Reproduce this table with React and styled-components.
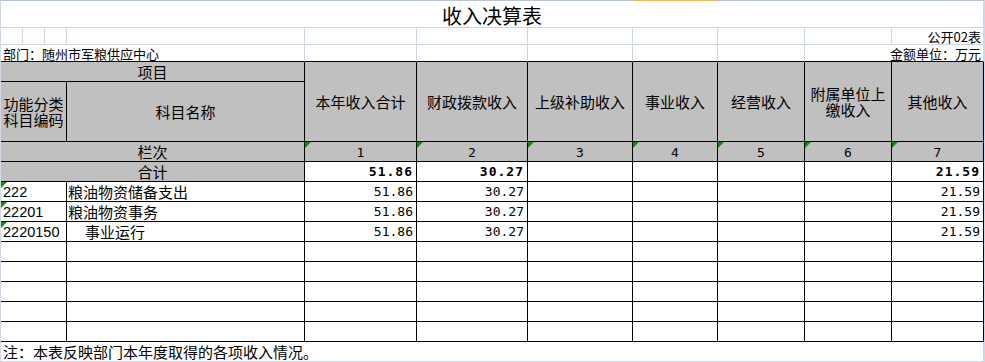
import React from "react";
import styled, { createGlobalStyle } from "styled-components";

const GRID = "#d0d7e5";
const GRAY = "#c0c0c0";

const Global = createGlobalStyle`
  body {
    margin: 0;
    background: #fff;
  }
`;

const Sheet = styled.div`
  display: grid;
  grid-template-columns: 22px 22px 22px 238px 112px 111px 105px 85px 87px 87px 92px;
  grid-template-rows: 1px 27px 17px 17px 20px 60px repeat(11, 20px);
  width: max-content;
  border-left: 1px solid ${GRID};
  border-right: 1px solid ${GRID};
  font-family: "Noto Sans CJK SC", sans-serif;
  font-size: 15px;
  line-height: 16px;
  color: #000;
`;

const Strip = styled.div`
  grid-column: span ${(p) => p.$span || 1};
  background: ${(p) => (p.$active ? "#f2b65a" : "#b9c6d9")};
`;

const Cell = styled.div`
  position: relative;
  box-sizing: border-box;
  grid-column: span ${(p) => p.$span || 1};
  grid-row: span ${(p) => p.$rows || 1};
  display: flex;
  align-items: center;
  justify-content: ${(p) => p.$align || "flex-start"};
  padding: 0 2px;
  white-space: nowrap;
  overflow: hidden;
  background: ${(p) => (p.$fill ? GRAY : "#fff")};
  border-right: 1px solid ${(p) => (p.$soft ? GRID : "#000")};
  border-bottom: 1px solid ${(p) => (p.$softBottom ? GRID : "#000")};

  ${(p) =>
    p.$mark &&
    `
    &::before {
      content: "";
      position: absolute;
      top: 0;
      left: 0;
      border-top: 6px solid #138a13;
      border-right: 6px solid transparent;
    }
  `}
`;

const Title = styled(Cell)`
  justify-content: center;
  padding-top: 3px;
  font-size: 20px;
  line-height: 20px;
`;

const Caption = styled(Cell)`
  font-size: 13px;
  line-height: 14px;
  padding-top: 1px;
`;

const HeadCell = styled(Cell)`
  justify-content: center;
  text-align: center;
  white-space: normal;
  background: ${GRAY};
`;

const Index = styled(Cell)`
  justify-content: center;
  background: ${GRAY};
  font-family: "DejaVu Sans Mono", monospace;
  font-size: 13px;
  padding-top: 2px;
`;

const NumCell = styled(Cell)`
  justify-content: flex-end;
  padding: 1px 3px 0 0;
  font-family: "DejaVu Sans Mono", monospace;
  font-size: 13px;
  font-weight: ${(p) => (p.$bold ? 700 : 400)};
  letter-spacing: ${(p) => (p.$bold ? "1px" : "0")};
`;

const CodeCell = styled(Cell)`
  padding: 1px 0 0 2px;
  font-family: "Liberation Sans", sans-serif;
  font-size: 14.5px;
`;

const NameCell = styled(Cell)`
  padding: 1px 0 0 ${(p) => (p.$indent ? 18 : 1)}px;
`;

const Note = styled(Cell)`
  padding: 1px 0 0 2px;
`;

const heads = [
  "本年收入合计",
  "财政拨款收入",
  "上级补助收入",
  "事业收入",
  "经营收入",
  "附属单位上缴收入",
  "其他收入",
];

const totals = ["51.86", "30.27", "", "", "", "", "21.59"];

const rows = [
  { code: "222", name: "粮油物资储备支出", vals: totals },
  { code: "22201", name: "粮油物资事务", vals: totals },
  { code: "2220150", name: "事业运行", indent: true, vals: totals },
  ...Array.from({ length: 5 }, () => ({ code: "", name: "", vals: Array(7).fill("") })),
];

export default function App() {
  return (
    <>
      <Global />
      <Sheet>
        <Strip $span={7} />
        <Strip $active />
        <Strip $span={3} />

        <Title $span={11} $soft $softBottom>
          收入决算表
        </Title>

        {Array.from({ length: 10 }, (_, i) => (
          <Caption key={i} $soft $softBottom />
        ))}
        <Caption $soft $softBottom $align="flex-end">
          公开02表
        </Caption>

        <Caption $span={4} $soft>
          部门：随州市军粮供应中心
        </Caption>
        {Array.from({ length: 5 }, (_, i) => (
          <Caption key={i} $soft />
        ))}
        <Caption $span={2} $soft $align="flex-end">
          金额单位：万元
        </Caption>

        <HeadCell $span={4}>项目</HeadCell>
        {heads.map((h) => (
          <HeadCell key={h} $rows={2}>
            {h}
          </HeadCell>
        ))}
        <HeadCell $span={3}>功能分类科目编码</HeadCell>
        <HeadCell>科目名称</HeadCell>

        <HeadCell $span={4}>栏次</HeadCell>
        {heads.map((h, i) => (
          <Index key={h} $mark>
            {i + 1}
          </Index>
        ))}

        <HeadCell $span={4}>合计</HeadCell>
        {totals.map((v, i) => (
          <NumCell key={i} $bold>
            {v}
          </NumCell>
        ))}

        {rows.map((r, ri) => (
          <React.Fragment key={ri}>
            <CodeCell $span={3} $mark={!!r.code}>
              {r.code}
            </CodeCell>
            <NameCell $indent={r.indent}>{r.name}</NameCell>
            {r.vals.map((v, i) => (
              <NumCell key={i}>{v}</NumCell>
            ))}
          </React.Fragment>
        ))}

        <Note $span={11} $soft $softBottom>
          注：本表反映部门本年度取得的各项收入情况。
        </Note>
      </Sheet>
    </>
  );
}
